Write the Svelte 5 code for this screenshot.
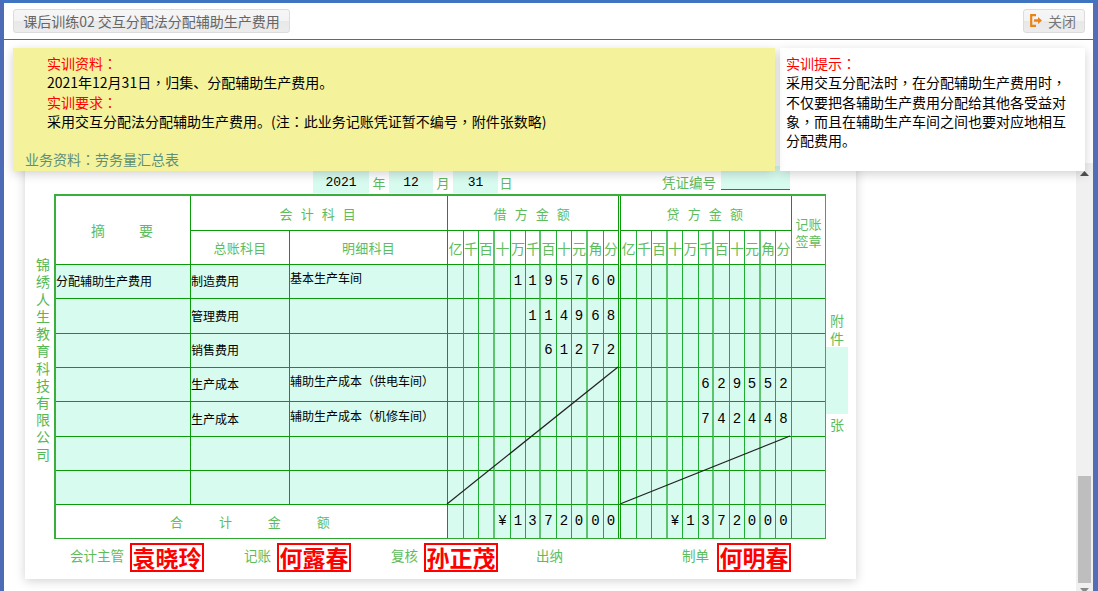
<script>
  const debitWidths = [16, 15, 16, 16, 15, 15, 16, 15, 16, 16, 15];
  const creditWidths = [16, 15, 16, 15, 16, 15, 16, 15, 16, 15, 16];
  const units = ['亿', '千', '百', '十', '万', '千', '百', '十', '元', '角', '分'];

  const rows = [
    { summary: '分配辅助生产费用', account: '制造费用', detail: '基本生产车间', debit: '1195760', credit: '' },
    { summary: '', account: '管理费用', detail: '', debit: '114968', credit: '' },
    { summary: '', account: '销售费用', detail: '', debit: '61272', credit: '' },
    { summary: '', account: '生产成本', detail: '辅助生产成本（供电车间）', debit: '', credit: '629552' },
    { summary: '', account: '生产成本', detail: '辅助生产成本（机修车间）', debit: '', credit: '742448' },
    { summary: '', account: '', detail: '', debit: '', credit: '' },
    { summary: '', account: '', detail: '', debit: '', credit: '' }
  ];

  const signers = [
    { label: '会计主管', name: '袁晓玲', cls: 's1' },
    { label: '记账', name: '何露春', cls: 's2' },
    { label: '复核', name: '孙正茂', cls: 's3' },
    { label: '出纳', name: '', cls: 's4' },
    { label: '制单', name: '何明春', cls: 's5' }
  ];

  function digits(value) {
    return value.padStart(11, ' ').split('');
  }

  function cellClass(i, side) {
    let cls = 'num';
    if (i === 2 || i === 5 || i === 8) cls += ' major';
    if (side === 'debit' && i === 10) cls += ' double';
    return cls;
  }
</script>

<div class="frame">
  <header class="topbar">
    <button class="btn title-btn">课后训练02 交互分配法分配辅助生产费用</button>
    <button class="btn close-btn">
      <svg width="12" height="13" viewBox="0 0 12 13">
        <path d="M6 1.2H1.2v10.6H6" fill="none" stroke="#ea8418" stroke-width="2.2" />
        <path d="M4 5.3h4V3l4 3.5L8 10V7.7H4z" fill="#ea8418" />
      </svg>
      关闭
    </button>
  </header>

  <div class="body">
    <div class="tips">
      <div class="material">
        <div class="red indent">实训资料<span class="cp">：</span></div>
        <div class="indent">2021年12月31日<span class="cp">，</span>归集、分配辅助生产费用。</div>
        <div class="red indent">实训要求<span class="cp">：</span></div>
        <div class="indent">采用交互分配法分配辅助生产费用。(注<span class="cp">：</span>此业务记账凭证暂不编号<span class="cp">，</span>附件张数略)</div>
        <div class="biz">业务资料<span class="cp">：</span>劳务量汇总表</div>
      </div>
      <div class="hint">
        <div class="red">实训提示<span class="cp">：</span></div>
        采用交互分配法时<span class="cp">，</span>在分配辅助生产费用时<span class="cp">，</span>不仅要把各辅助生产费用分配给其他各受益对象<span class="cp">，</span>而且在辅助生产车间之间也要对应地相互分配费用。
      </div>
    </div>

    <div class="scroll-wrap">
      <div class="content">
        <div class="paper">
          <div class="date-row">
            <span class="field f-year">2021</span>
            <span class="unit">年</span>
            <span class="field f-month">12</span>
            <span class="unit">月</span>
            <span class="field f-day">31</span>
            <span class="unit last-unit">日</span>
            <span class="voucher-label">凭证编号</span>
            <span class="voucher-field"></span>
          </div>

          <div class="sheet">
            <div class="company">锦绣人生教育科技有限公司</div>

            <div class="table-wrap">
              <table>
                <colgroup>
                  <col style="width: 135px" />
                  <col style="width: 99px" />
                  <col style="width: 158px" />
                  {#each debitWidths as w}<col style="width: {w}px" />{/each}
                  <col style="width: 2px" />
                  {#each creditWidths as w}<col style="width: {w}px" />{/each}
                  <col style="width: 33px" />
                </colgroup>
                <thead>
                  <tr class="head-1">
                    <th rowspan="2" class="wide-4">摘　　要</th>
                    <th colspan="2" class="spaced">会 计 科 目</th>
                    <th colspan="11" class="spaced">借 方 金 额</th>
                    <th class="gap" rowspan="2"></th>
                    <th colspan="11" class="spaced">贷 方 金 额</th>
                    <th rowspan="2" class="sign last">记账<br />签章</th>
                  </tr>
                  <tr class="head-2">
                    <th>总账科目</th>
                    <th>明细科目</th>
                    {#each units as u, i}<th class={cellClass(i, 'debit')}>{u}</th>{/each}
                    {#each units as u, i}<th class={cellClass(i, 'credit')}>{u}</th>{/each}
                  </tr>
                </thead>
                <tbody>
                  {#each rows as row}
                    <tr>
                      <td class="txt">{row.summary}</td>
                      <td class="txt">{row.account}</td>
                      <td class="txt detail">{row.detail}</td>
                      {#each digits(row.debit) as d, i}<td class={cellClass(i, 'debit')}>{d}</td>{/each}
                      <td class="gap"></td>
                      {#each digits(row.credit) as d, i}<td class={cellClass(i, 'credit')}>{d}</td>{/each}
                      <td class="last"></td>
                    </tr>
                  {/each}
                  <tr class="total">
                    <td colspan="3" class="total-label">合　　计　　金　　额</td>
                    {#each digits('¥1372000') as d, i}<td class={cellClass(i, 'debit')}>{d}</td>{/each}
                    <td class="gap"></td>
                    {#each digits('¥1372000') as d, i}<td class={cellClass(i, 'credit')}>{d}</td>{/each}
                    <td class="last"></td>
                  </tr>
                </tbody>
              </table>
              <svg class="strikes" width="772" height="345">
                <line x1="393" y1="310" x2="564" y2="173" />
                <line x1="566" y1="310" x2="736" y2="242" />
              </svg>
            </div>

            <div class="attach">
              <div class="attach-label">附件</div>
              <div class="attach-field"></div>
              <div class="attach-unit">张</div>
            </div>
          </div>

          <div class="signers">
            {#each signers as s}
              <div class="signer {s.cls}">
                <span class="sign-label">{s.label}</span>
                {#if s.name}<span class="stamp">{s.name}</span>{/if}
              </div>
            {/each}
          </div>
        </div>
      </div>

      <div class="scrollbar">
        <svg class="arrow up" width="9" height="5" viewBox="0 0 9 5"><path d="M4.5 0L9 5H0z" fill="#505050" /></svg>
        <div class="thumb"></div>
        <svg class="arrow down" width="9" height="5" viewBox="0 0 9 5"><path d="M4.5 5L9 0H0z" fill="#888" /></svg>
      </div>
    </div>
  </div>
</div>

<style>
  :global(body) {
    margin: 0;
    overflow: hidden;
    background: #fff;
  }

  .frame {
    width: 1098px;
    height: 591px;
    box-sizing: border-box;
    display: flex;
    flex-direction: column;
    background: #fff;
    border-top: 3px solid #3f74c1;
    border-left: 4px solid #4e6cb6;
    border-right: 5px solid #546db7;
    font-family: "Noto Sans CJK SC", "Liberation Sans", sans-serif;
    font-size: 14px;
    color: #000;
    overflow: hidden;
  }

  .topbar {
    height: 37px;
    box-sizing: border-box;
    flex: none;
    display: flex;
    align-items: center;
    justify-content: space-between;
    padding: 0 8px 1px 9px;
    border-bottom: 1px solid #2a75bb;
  }

  .btn {
    height: 24px;
    box-sizing: border-box;
    padding: 0;
    border: 1px solid #dcdcdc;
    border-radius: 3px;
    background: linear-gradient(to bottom, #f6f6f6 0%, #f3f3f3 50%, #e8e8e8 52%, #ececec 100%);
    color: #666;
    font-family: inherit;
    font-size: 14px;
    line-height: 20px;
  }

  .title-btn {
    width: 277px;
  }

  .close-btn {
    width: 62px;
    display: flex;
    align-items: center;
    gap: 6px;
    padding-left: 6px;
    color: #777;
  }

  .body {
    position: relative;
    flex: 1;
    min-height: 0;
    display: flex;
    flex-direction: column;
  }

  .tips {
    position: absolute;
    top: 8px;
    left: 9px;
    z-index: 5;
    display: flex;
    gap: 5px;
    height: 123px;
  }

  .material {
    position: relative;
    width: 762px;
    box-sizing: border-box;
    padding: 6px 0 0 34px;
    background: #f4f39b;
    line-height: 19.3px;
    box-shadow: 0 3px 10px rgba(0, 0, 0, 0.18);
  }

  .hint {
    width: 305px;
    box-sizing: border-box;
    padding: 6px 12px 0 6px;
    background: #fff;
    line-height: 19.3px;
    box-shadow: 0 3px 10px rgba(0, 0, 0, 0.18);
  }

  .red {
    color: #f00;
  }

  /* centred full-width punctuation, as in the reference */
  .cp {
    font-family: "Noto Sans CJK TC", sans-serif;
  }

  .biz {
    position: absolute;
    left: 12px;
    top: 102px;
    color: #5f8f7c;
  }

  .scroll-wrap {
    flex: 1;
    min-height: 0;
    margin-top: 123px;
    display: flex;
  }

  .content {
    flex: 1;
    min-width: 0;
    overflow: hidden;
    padding-left: 21px;
  }

  .paper {
    width: 831px;
    height: 416px;
    box-sizing: border-box;
    padding-top: 3px;
    background: #fff;
    box-shadow: 0 2px 10px rgba(0, 0, 0, 0.18);
  }

  .date-row {
    height: 28px;
    box-sizing: border-box;
    display: flex;
    padding-left: 288px;
    color: #5cb85c;
  }

  .field {
    display: flex;
    align-items: center;
    justify-content: center;
    height: 27px;
    padding-top: 6px;
    box-sizing: border-box;
    background: #d7fbef;
    color: #000;
    font-family: "Liberation Mono", monospace;
    font-size: 13px;
  }

  .f-year { width: 56px; }
  .f-month { width: 44px; }
  .f-day { width: 45px; }

  .unit {
    width: 20px;
    padding-top: 7px;
    text-align: center;
    font-size: 13px;
    line-height: 19px;
  }

  .last-unit {
    width: 16px;
  }

  .voucher-label {
    margin-left: 148px;
    width: 59px;
    padding-top: 7px;
    line-height: 19px;
    font-size: 13.5px;
    white-space: nowrap;
  }

  .voucher-field {
    width: 69px;
    height: 24px;
    box-sizing: border-box;
    background: #d7fbef;
    border-bottom: 1px solid #0a9a0a;
  }

  .sheet {
    display: flex;
  }

  .company {
    width: 29px;
    box-sizing: border-box;
    padding: 0 0 14px 11px;
    align-self: center;
    color: #54b854;
    font-size: 14px;
    line-height: 17.2px;
    word-break: break-all;
  }

  .table-wrap {
    position: relative;
    width: 772px;
    flex: none;
  }

  table {
    width: 772px;
    table-layout: fixed;
    border-collapse: separate;
    border-spacing: 0;
    border: 2px solid #3cae3c;
    border-right-width: 1px;
    border-bottom: 1px solid #2ea82e;
    box-sizing: border-box;
    font-size: 12px;
  }

  th, td {
    padding: 0;
    border-right: 1px solid #0a9a0a;
    border-bottom: 1px solid #0a9a0a;
    box-sizing: border-box;
    overflow: hidden;
    white-space: nowrap;
  }

  th {
    font-weight: normal;
    color: #5dbd5d;
    font-size: 13px;
    background: #fff;
  }

  .head-1 th {
    height: 35px;
    letter-spacing: 2.6px;
  }

  .head-2 th {
    height: 34px;
    letter-spacing: 0.3px;
  }

  .head-2 th.num {
    letter-spacing: 0;
    font-size: 14px;
    color: #5dbd5d;
  }

  .head-1 th.wide-4 {
    letter-spacing: 2px;
    font-size: 14px;
  }

  .head-1 th.sign {
    font-size: 13px;
    line-height: 17px;
    letter-spacing: 0;
    padding-top: 3px;
  }

  td {
    height: 34px;
    background: #d7fbef;
  }

  tbody tr:nth-child(2) td,
  tbody tr:nth-child(5) td {
    height: 35px;
  }

  td.txt {
    text-align: left;
    padding-bottom: 2px;
  }

  td.detail {
    padding-bottom: 8px;
  }

  th.num, td.num {
    text-align: center;
    border-right-color: #1fae33;
  }

  td.num {
    padding-bottom: 1px;
    font-family: "Liberation Mono", monospace;
    font-size: 14px;
    white-space: pre;
  }

  th.major, td.major {
    border-right: 2px solid #5bc46c;
  }

  th.double, td.double {
    border-right-color: #0a9a0a;
  }

  .gap {
    border-right: 1px solid #0a9a0a;
    background: #d7fbef;
  }

  th.gap {
    background: #fff;
    border-bottom: none;
  }

  .total td {
    height: 33px;
    border-bottom: none;
  }

  .total .total-label {
    background: #fff;
    color: #5dbd5d;
    text-align: center;
    font-size: 13px;
    letter-spacing: 3.3px;
  }

  .last {
    border-right: none;
  }

  .strikes {
    position: absolute;
    left: 0;
    top: 0;
    pointer-events: none;
  }

  .strikes line {
    stroke: #222;
    stroke-width: 1.2;
  }

  .attach {
    width: 22px;
    display: flex;
    flex-direction: column;
    align-items: center;
    padding-top: 117px;
    color: #5dbd5d;
    font-size: 14px;
  }

  .attach-label {
    width: 14px;
    line-height: 18px;
  }

  .attach-field {
    width: 22px;
    height: 67px;
    background: #d7fbef;
  }

  .attach-unit {
    line-height: 20px;
  }

  .signers {
    display: flex;
    align-items: center;
    height: 31px;
    padding-left: 45px;
    margin-top: 3px;
  }

  .signer {
    display: flex;
    align-items: center;
    flex: none;
  }

  .s1 { width: 174px; }
  .s2 { width: 147px; }
  .s3 { width: 145px; }
  .s4 { width: 146px; }

  .sign-label {
    color: #5dbd5d;
    font-size: 13.5px;
    margin-right: 6px;
    margin-bottom: 6px;
    white-space: nowrap;
  }

  .s5 .sign-label {
    margin-right: 8px;
  }

  .stamp {
    width: 74px;
    height: 29px;
    box-sizing: border-box;
    border: 2px solid #f00;
    color: #f00;
    font-size: 23px;
    font-weight: 700;
    line-height: 25px;
    text-align: center;
    white-space: nowrap;
  }

  .scrollbar {
    position: relative;
    width: 17px;
    flex: none;
    background: #f0f0f0;
  }

  .arrow {
    position: absolute;
    left: 4px;
  }

  .arrow.up { top: 8px; }
  .arrow.down { bottom: -2px; }

  .thumb {
    position: absolute;
    left: 2px;
    right: 2px;
    top: 313px;
    height: 107px;
    background: #bebebe;
  }
</style>
